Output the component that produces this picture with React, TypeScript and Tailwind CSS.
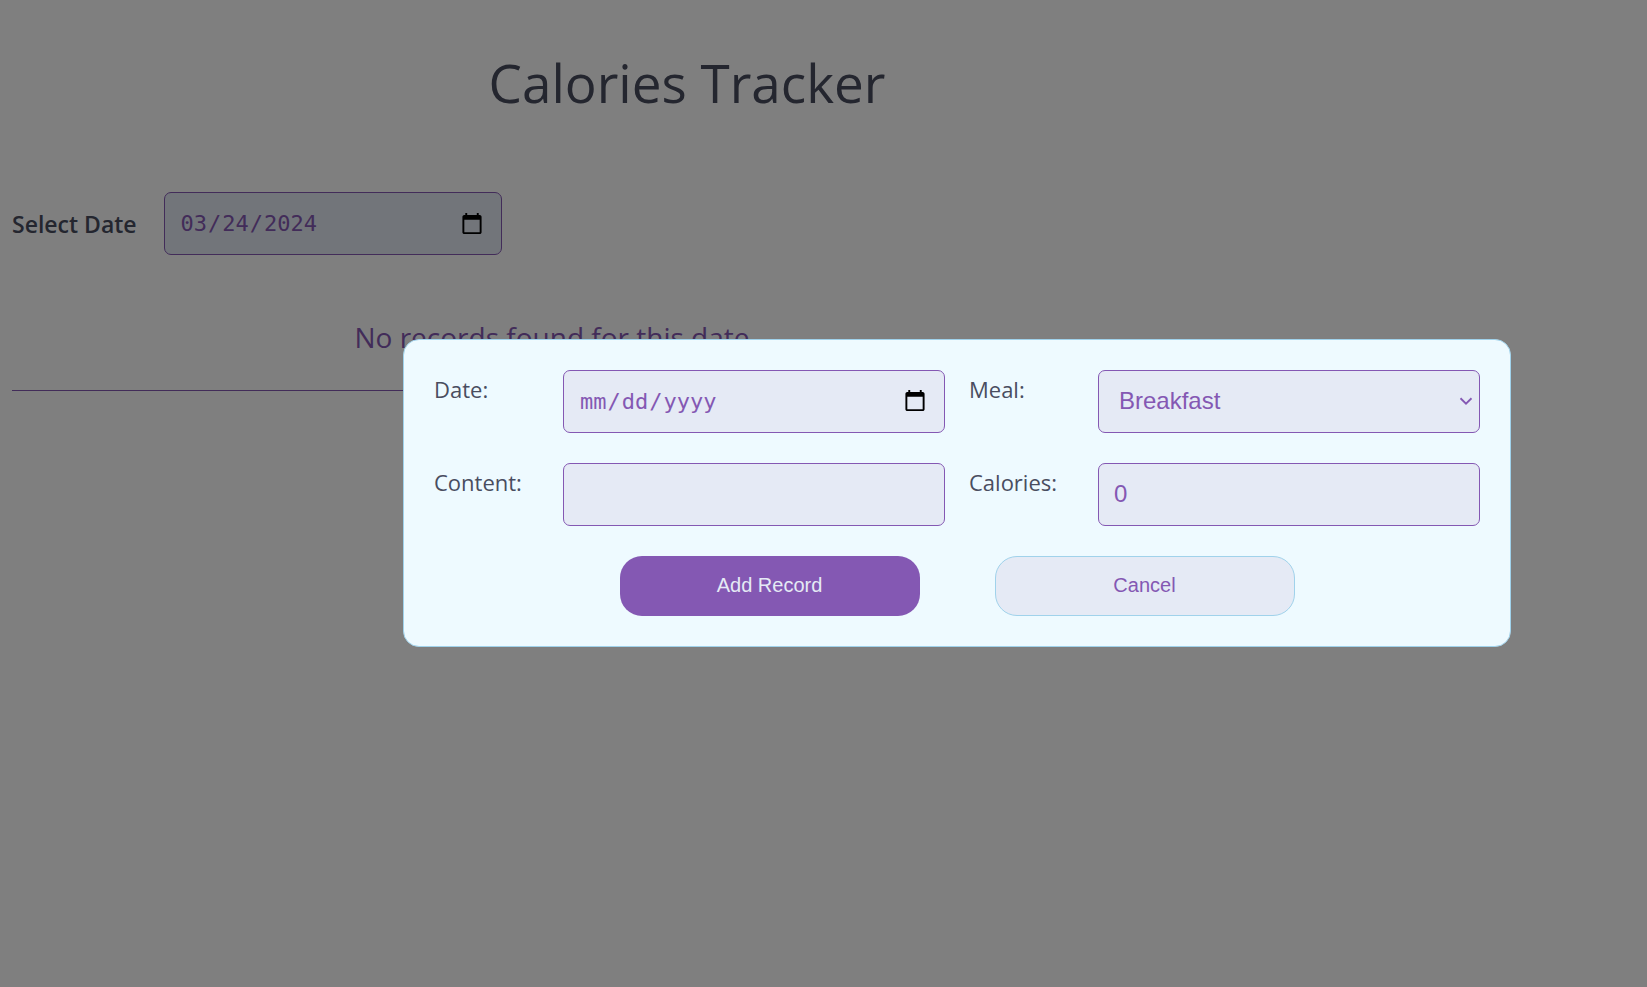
import type { ReactNode } from "react";
import { ChevronDown } from "lucide-react";

const fieldClass =
  "block h-[63px] w-full rounded-[7px] border border-[#8458B3] bg-[#E5EAF5] text-[#8458B3] outline-none";
const sansField = `${fieldClass} font-['Liberation_Sans',sans-serif] text-2xl`;
const dateField = `${fieldClass} px-[15px] font-['DejaVu_Sans_Mono',monospace] text-[22px] [&::-webkit-calendar-picker-indicator]:size-6`;
const buttonClass =
  "h-[60px] w-[300px] rounded-[22px] pb-0.5 font-['Liberation_Sans',sans-serif] text-xl";

function Field({ id, label, children }: { id: string; label: string; children: ReactNode }) {
  return (
    <div className="grid grid-cols-[129px_1fr] items-start">
      <label htmlFor={id} className="pt-[3px] text-[22px] leading-8">
        {label}
      </label>
      {children}
    </div>
  );
}

function RecordDialog() {
  return (
    <div className="fixed inset-0 flex items-center bg-black/50 pr-[136px] pb-0.5 pl-[403px]">
      <form
        role="dialog"
        aria-label="Add Record"
        onSubmit={(e) => e.preventDefault()}
        className="flex-1 rounded-2xl border border-[#A0D2EB] bg-[#EEFAFF] p-[30px]"
      >
        <div className="grid grid-cols-2 gap-x-6 gap-y-[30px]">
          <Field id="date" label="Date:">
            <input id="date" type="date" className={dateField} />
          </Field>
          <Field id="meal" label="Meal:">
            <div className="relative">
              <select id="meal" className={`${sansField} appearance-none pr-8 pl-5`}>
                <option>Breakfast</option>
                <option>Lunch</option>
                <option>Dinner</option>
                <option>Snack</option>
              </select>
              <ChevronDown
                size={22}
                strokeLinecap="butt"
                strokeLinejoin="miter"
                className="pointer-events-none absolute inset-y-0 right-[3px] my-auto text-[#8458B3]"
              />
            </div>
          </Field>
          <Field id="content" label="Content:">
            <input id="content" type="text" className={`${sansField} px-[15px]`} />
          </Field>
          <Field id="calories" label="Calories:">
            <input id="calories" type="number" defaultValue={0} className={`${sansField} px-[15px]`} />
          </Field>
        </div>
        <div className="mt-[30px] flex justify-center gap-[75px]">
          <button type="submit" className={`${buttonClass} bg-[#8458B3] text-[#E5EAF5]`}>
            Add Record
          </button>
          <button
            type="button"
            className={`${buttonClass} border border-[#A0D2EB] bg-[#E5EAF5] text-[#8458B3]`}
          >
            Cancel
          </button>
        </div>
      </form>
    </div>
  );
}

export default function App() {
  return (
    <div className="min-h-screen bg-white font-['Open_Sans',sans-serif] text-[#494D5F]">
      <main className="max-w-[1374px] px-3 pt-[47px]">
        <h1 className="text-center text-[53px] leading-[72px]">Calories Tracker</h1>
        <div className="mt-[73px] flex items-center gap-[27px]">
          <label htmlFor="selected-date" className="text-[23px] leading-8 font-semibold">
            Select Date
          </label>
          <div className="w-[338px]">
            <input id="selected-date" type="date" defaultValue="2024-03-24" className={dateField} />
          </div>
        </div>
        <section className="mt-[60px] w-4/5 border-b border-[#8458B3] pb-[30px] text-center">
          <p className="text-[28px] leading-[45px] text-[#8458B3]">No records found for this date</p>
        </section>
      </main>
      <RecordDialog />
    </div>
  );
}
